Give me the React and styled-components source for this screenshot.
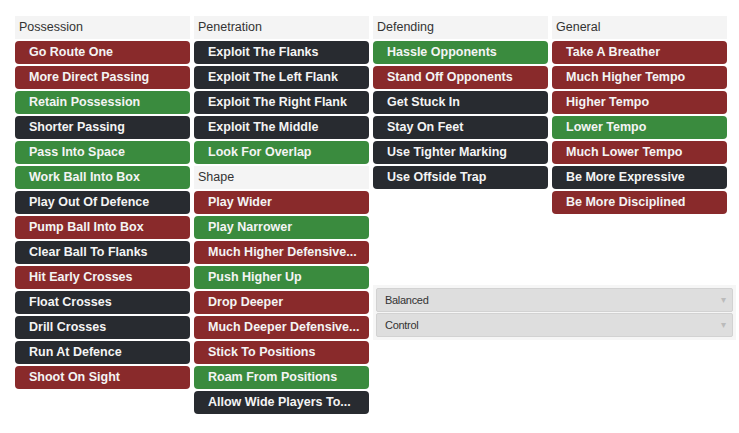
import React from "react";
import styled, { createGlobalStyle } from "styled-components";

const GlobalStyle = createGlobalStyle`
  body {
    margin: 0;
    background: #fff;
    font-family: "Liberation Sans", Arial, sans-serif;
  }
`;

const columns = [
  {
    groups: [
      {
        title: "Possession",
        items: [
          ["Go Route One", "red"],
          ["More Direct Passing", "red"],
          ["Retain Possession", "green"],
          ["Shorter Passing", "dark"],
          ["Pass Into Space", "green"],
          ["Work Ball Into Box", "green"],
          ["Play Out Of Defence", "dark"],
          ["Pump Ball Into Box", "red"],
          ["Clear Ball To Flanks", "dark"],
          ["Hit Early Crosses", "red"],
          ["Float Crosses", "dark"],
          ["Drill Crosses", "dark"],
          ["Run At Defence", "dark"],
          ["Shoot On Sight", "red"],
        ],
      },
    ],
  },
  {
    groups: [
      {
        title: "Penetration",
        items: [
          ["Exploit The Flanks", "dark"],
          ["Exploit The Left Flank", "dark"],
          ["Exploit The Right Flank", "dark"],
          ["Exploit The Middle", "dark"],
          ["Look For Overlap", "green"],
        ],
      },
      {
        title: "Shape",
        items: [
          ["Play Wider", "red"],
          ["Play Narrower", "green"],
          ["Much Higher Defensive...", "red"],
          ["Push Higher Up", "green"],
          ["Drop Deeper", "red"],
          ["Much Deeper Defensive...", "red"],
          ["Stick To Positions", "red"],
          ["Roam From Positions", "green"],
          ["Allow Wide Players To...", "dark"],
        ],
      },
    ],
  },
];

const rightColumns = [
  {
    title: "Defending",
    items: [
      ["Hassle Opponents", "green"],
      ["Stand Off Opponents", "red"],
      ["Get Stuck In", "dark"],
      ["Stay On Feet", "dark"],
      ["Use Tighter Marking", "dark"],
      ["Use Offside Trap", "dark"],
    ],
  },
  {
    title: "General",
    items: [
      ["Take A Breather", "red"],
      ["Much Higher Tempo", "red"],
      ["Higher Tempo", "red"],
      ["Lower Tempo", "green"],
      ["Much Lower Tempo", "red"],
      ["Be More Expressive", "dark"],
      ["Be More Disciplined", "red"],
    ],
  },
];

const tones = {
  red: "#892a2b",
  green: "#3a8b3e",
  dark: "#282b30",
};

const Group = ({ title, items }) => (
  <>
    <Header>{title}</Header>
    {items.map(([label, tone]) => (
      <Instruction key={label} $tone={tone}>
        {label}
      </Instruction>
    ))}
  </>
);

const App = () => (
  <Page>
    <GlobalStyle />
    {columns.map((col, i) => (
      <Column key={i}>
        {col.groups.map((g) => (
          <Group key={g.title} {...g} />
        ))}
      </Column>
    ))}
    <RightSide>
      <RightColumns>
        {rightColumns.map((g) => (
          <Column key={g.title}>
            <Group {...g} />
          </Column>
        ))}
      </RightColumns>
      <SelectPanel>
        <Select>
          Balanced
          <Caret>▾</Caret>
        </Select>
        <Select>
          Control
          <Caret>▾</Caret>
        </Select>
      </SelectPanel>
    </RightSide>
  </Page>
);

export default App;

const Page = styled.div`
  display: flex;
  align-items: flex-start;
  gap: 4px;
  padding: 16px 0 15px 15px;
`;

const Column = styled.div`
  width: 175px;
  flex-shrink: 0;
  display: flex;
  flex-direction: column;
  gap: 2px;
`;

const Header = styled.div`
  height: 23px;
  line-height: 23px;
  background: #f4f4f4;
  color: #333;
  font-size: 12.5px;
  padding-left: 4px;
`;

const Instruction = styled.div`
  height: 23px;
  line-height: 23px;
  border-radius: 4px;
  background: ${(p) => tones[p.$tone]};
  color: #f4f4f4;
  font-size: 12.5px;
  font-weight: bold;
  padding-left: 14px;
  white-space: nowrap;
  overflow: hidden;
`;

const RightSide = styled.div`
  display: flex;
  flex-direction: column;
  align-items: flex-start;
  flex-shrink: 0;
`;

const RightColumns = styled.div`
  display: flex;
  gap: 4px;
`;

const SelectPanel = styled.div`
  width: 357px;
  margin-top: 71px;
  background: #f6f6f6;
  padding: 3px;
  display: flex;
  flex-direction: column;
  gap: 1px;
`;

const Select = styled.div`
  position: relative;
  height: 22px;
  line-height: 22px;
  background: #dedede;
  border: 1px solid #d2d2d2;
  border-radius: 2px;
  color: #333;
  font-size: 11px;
  padding-left: 8px;
  letter-spacing: -0.3px;
`;

const Caret = styled.span`
  position: absolute;
  right: 6px;
  top: 0;
  color: #bbb;
  font-size: 10px;
`;
